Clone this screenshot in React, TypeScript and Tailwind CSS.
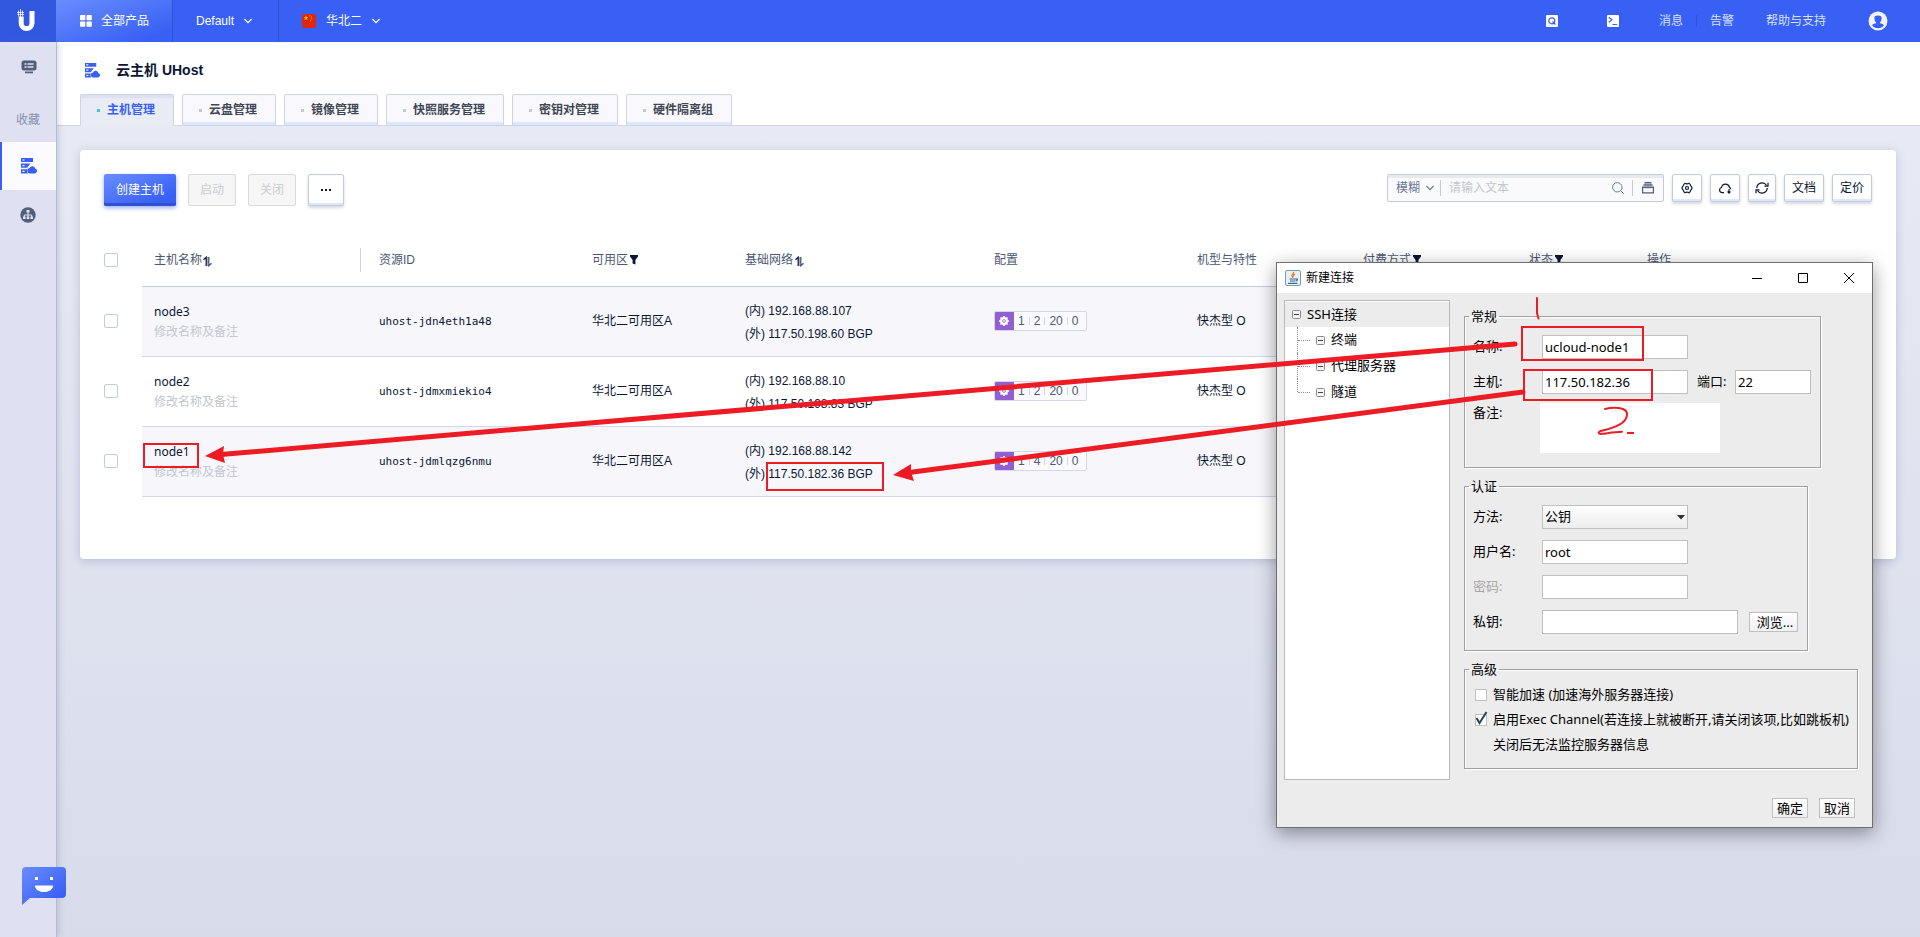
import React from "react";

const SANS = "font-['Liberation_Sans','Noto_Sans_CJK_SC',sans-serif]";

type Host = { name: string; id: string; inner: string; outer: string; spec: string[] };

const hosts: Host[] = [
  { name: "node3", id: "uhost-jdn4eth1a48", inner: "192.168.88.107", outer: "117.50.198.60 BGP", spec: ["1", "2", "20", "0"] },
  { name: "node2", id: "uhost-jdmxmiekio4", inner: "192.168.88.10", outer: "117.50.198.83 BGP", spec: ["1", "2", "20", "0"] },
  { name: "node1", id: "uhost-jdmlqzg6nmu", inner: "192.168.88.142", outer: "117.50.182.36 BGP", spec: ["1", "4", "20", "0"] },
];

const tabs = ["主机管理", "云盘管理", "镜像管理", "快照服务管理", "密钥对管理", "硬件隔离组"];

function Chevron({ className = "" }: { className?: string }) {
  return (
    <svg className={className} width="8" height="6" viewBox="0 0 8 6" fill="none" stroke="currentColor" strokeWidth="1.2">
      <path d="M0.4 1l3.600 3.600L7.600 1" />
    </svg>
  );
}

function ServerCloud({ size }: { size: number }) {
  return (
    <svg width={size} height={size} viewBox="0 0 16 16">
      <path fill="#3860f4" d="M0 0h12v4H0zM0 5.500h9.500L7 8.500 6.200 9.800H0zM0 11.300h6.200a4 4 0 0 0 .6 4.200H0z" />
      <path fill="#3860f4" d="M9.600 15.500h4a2.500 2.500 0 0 0 .6-4.900 3 3 0 0 0-5.700-.6 2.800 2.800 0 0 0 1.100 5.500z" />
      <path stroke="#fff" strokeWidth="1.100" d="M1.500 2h2M1.500 7.600h2M1.500 13.400h2" />
    </svg>
  );
}

function SortIcon() {
  return (
    <svg className="mt-[2px]" width="9" height="11" viewBox="0 0 9 11" fill="none" strokeWidth="1.300">
      <path fill="#a3abbc" d="M3.500 1h2v9h-2z" />
      <path stroke="#16233f" d="M0.500 3.800L3.200 1.200V10" />
      <path stroke="#4b5873" d="M8.500 7.200L5.800 9.800V1" />
    </svg>
  );
}

function FilterIcon() {
  return (
    <svg width="8" height="10" viewBox="0 0 8 10">
      <path fill="#0a1633" d="M0 0h8v1.500L5.400 5v4.500L2.600 8.500V5L0 1.500z" />
    </svg>
  );
}

function Check({ label }: { label: string }) {
  return (
    <input
      type="checkbox"
      aria-label={label}
      className="block size-[14px] appearance-none rounded-[2px] border border-[#c3cad9] bg-white"
    />
  );
}

function TopBar() {
  return (
    <header className="flex h-[42px] items-stretch bg-[#3860f4] text-xs text-white">
      <a href="#" aria-label="UCloud" className="flex w-14 items-center justify-center bg-[#3358e0] pr-1">
        <svg width="22" height="24" viewBox="0 0 22 24">
          <path fill="none" stroke="#fff" strokeWidth="5" d="M6.200 7.500v6.700a5.400 5.400 0 0 0 10.800 0V2" />
          <path stroke="#fff" strokeWidth="0.900" strokeOpacity="0.850" d="M3.500 1.500v6M5.500 0v8M7.500 1.500v6M2 3.500h7M2.500 5.500h6.500" />
        </svg>
      </a>
      <button className="flex w-[117px] items-center gap-[9px] border-r border-[#3152c4] bg-linear-to-br from-[#6a8cff] to-[#3860f4] to-85% pl-6">
        <svg width="12" height="12" viewBox="0 0 12 12" fill="#fff">
          <rect width="5.300" height="5.300" rx="0.800" />
          <rect x="6.500" width="5.300" height="5.300" rx="0.800" />
          <rect y="6.500" width="5.300" height="5.300" rx="0.800" />
          <rect x="6.500" y="6.500" width="5.300" height="5.300" rx="0.800" />
        </svg>
        全部产品
      </button>
      <button className="flex w-[106px] items-center gap-[10px] border-r border-[#3152c4] pl-[23px]">
        Default
        <Chevron />
      </button>
      <button className="flex items-center gap-[10px] pl-[23px]">
        <svg width="14" height="14" viewBox="0 0 14 14">
          <rect width="14" height="14" rx="2" fill="#de2910" />
          <path fill="#ffde00" d="M4 1.800l.6 1.500h1.600L4.900 4.300l.5 1.600L4 5l-1.400.9.500-1.600-1.300-1h1.600z" />
          <path fill="#f5a800" d="M7.500 1.200h1v1h-1zM9 2.600h1v1H9zM9.200 4.600h1v1h-1zM8 6.200h1v1H8z" />
        </svg>
        华北二
        <Chevron />
      </button>
      <div className="ml-auto flex items-center pr-8 text-[#d9e1ff]">
        <button aria-label="搜索">
          <svg width="12" height="12" viewBox="0 0 12 12">
            <rect width="12" height="12" rx="1" fill="#fff" />
            <circle cx="5.800" cy="5.800" r="3" fill="none" stroke="#3860f4" strokeWidth="1.200" />
            <path stroke="#3860f4" strokeWidth="1.200" d="M6.500 6.500l3 3" />
          </svg>
        </button>
        <button aria-label="终端" className="ml-[49px]">
          <svg width="12" height="12" viewBox="0 0 12 12">
            <rect width="12" height="12" rx="1" fill="#fff" />
            <path fill="none" stroke="#3860f4" strokeWidth="1.200" d="M1.800 2.200L5 4.700 1.800 7.200M5.500 9.500h4.500" />
          </svg>
        </button>
        <a href="#" className="ml-10">消息</a>
        <span className="mx-[13px] h-3 w-px bg-[#3152d8]" />
        <a href="#">告警</a>
        <a href="#" className="ml-8">帮助与支持</a>
        <button aria-label="账户" className="ml-[42px]">
          <svg width="20" height="20" viewBox="0 0 20 20">
            <circle cx="10" cy="10" r="9.500" fill="#f1f4ff" />
            <path fill="#3860f4" d="M10 4.500c2.300 0 3.800.8 3.600 2.500 0 2-.7 3.600-1.700 4.500v.8c1.800.4 3.400 1 4.100 2a7.500 7.500 0 0 1-12 0c.7-1 2.300-1.600 4.100-2v-.8C7.100 10.600 6.400 9 6.400 7c-.2-1.700 1.300-2.500 3.600-2.500z" />
          </svg>
        </button>
      </div>
    </header>
  );
}

function SideBar() {
  return (
    <nav className="relative z-10 flex w-[57px] shrink-0 flex-col border-r border-[#b3bbd0] bg-[#dfe0f1] pt-[17px] text-xs text-[#8590ab] shadow-[2px_0_6px_rgba(100,110,150,0.25)]">
      <button aria-label="控制台" className="ml-[21px] self-start">
        <svg width="16" height="16" viewBox="0 0 16 16" fill="#525f78">
          <rect x="0.500" y="1.500" width="15" height="10" rx="2.500" />
          <path d="M4 12.500h8v1.800H4z" />
          <path stroke="#dfe0f1" strokeWidth="1.300" d="M3.500 5h2M6.500 5h6M3.500 8h2M6.500 8h6" />
        </svg>
      </button>
      <span className="mt-9 text-center leading-[18px]">收藏</span>
      <a href="#" aria-label="云主机" className="mt-[13px] flex h-12 items-center justify-center border-l-2 border-[#3860f4] bg-[#fafaff]">
        <ServerCloud size={16} />
      </a>
      <a href="#" aria-label="网络" className="flex h-[50px] items-center justify-center">
        <svg width="16" height="16" viewBox="0 0 16 16">
          <circle cx="8" cy="8" r="7.700" fill="#525f78" />
          <path fill="none" stroke="#dfe0f1" strokeWidth="1" d="M8 5v5M4.300 10V8h7.400v2" />
          <path fill="#dfe0f1" d="M6.500 3h3v2.500h-3zM3 9.500h2.600V12H3zM6.700 9.500h2.600V12H6.700zM10.400 9.500H13V12h-2.600z" />
        </svg>
      </a>
    </nav>
  );
}

const toolBtn =
  "flex h-7 items-center justify-center rounded-[2px] border border-[#c3cad9] bg-white text-xs text-[#0b1633] shadow-[inset_0_-2px_0_#dfe7ff,0_2px_3px_rgba(60,70,110,0.2)]";

function Toolbar() {
  return (
    <div className="flex items-start text-xs">
      <button className="h-8 w-[72px] rounded-[2px] bg-linear-to-br from-[#6a8cff] to-[#3860f4] to-80% text-white shadow-[inset_0_-3px_0_#3152cf,0_2px_4px_rgba(56,96,244,0.5)]">
        创建主机
      </button>
      <button disabled className="ml-3 h-8 w-12 rounded-[2px] border border-[#d8dade] bg-[#f6f6f6] text-[#c9cbd1]">启动</button>
      <button disabled className="ml-3 h-8 w-12 rounded-[2px] border border-[#d8dade] bg-[#f6f6f6] text-[#c9cbd1]">关闭</button>
      <button
        aria-label="更多"
        className="ml-3 flex h-8 w-9 items-center justify-center rounded-[2px] border border-[#c3cad9] bg-white shadow-[inset_0_-2px_0_#dfe7ff,0_2px_3px_rgba(60,70,110,0.2)]"
      >
        <svg width="10" height="2" viewBox="0 0 10 2" fill="#0b1633">
          <path d="M0 0h2v2H0zM4 0h2v2H4zM8 0h2v2H8z" />
        </svg>
      </button>
      <div className="ml-auto flex gap-2">
        <div className="flex h-7 w-[277px] items-center rounded-[2px] border border-[#c3cad9] bg-[#fafafc] pr-[9px] pl-2 text-[#6b7894] shadow-[inset_0_3px_0_#e9eaee]">
          <div className="relative flex w-[38px] items-center">
            <select aria-label="匹配方式" className="w-full appearance-none bg-transparent">
              <option>模糊</option>
            </select>
            <Chevron className="pointer-events-none absolute right-0" />
          </div>
          <span className="mr-2 ml-[6px] h-4 w-px bg-[#c3cad9]" />
          <input aria-label="搜索文本" placeholder="请输入文本" className="min-w-0 flex-1 bg-transparent outline-none placeholder:text-[#c2c6d0]" />
          <button aria-label="搜索">
            <svg width="12" height="12" viewBox="0 0 12 12" fill="none" stroke="#6b7894" strokeWidth="1">
              <circle cx="5.300" cy="5.300" r="4.700" />
              <path d="M8.700 8.700l3 3" />
            </svg>
          </button>
          <span className="mr-[9px] ml-2 h-4 w-px bg-[#c3cad9]" />
          <button aria-label="分组">
            <svg width="12" height="12" viewBox="0 0 12 12" fill="none" stroke="#525f78">
              <path d="M2.500 0.700h7M1.500 3h9" strokeWidth="1.400" />
              <path d="M0.600 5.500h10.800v5.400H0.600z" strokeWidth="1.200" />
              <path d="M0 5.300h12" strokeWidth="1.600" />
            </svg>
          </button>
        </div>
        <button aria-label="设置" className={`${toolBtn} w-[30px]`}>
          <svg width="12" height="12" viewBox="0 0 24 24" fill="none" stroke="#0b1633" strokeWidth="2.400" strokeLinejoin="round">
            <path d="M8 2.500c1.500 0 2.500 1.500 4 1.500s2.500-1.500 4-1.500 2.500 3.500 3.500 5 2.500 2.500 2.500 4.500-1.500 3-2.500 4.500-2 5-3.500 5-2.500-1.500-4-1.500-2.500 1.500-4 1.500-2.500-3.500-3.500-5S2 14 2 12s1.500-3 2.500-4.500 2-5 3.500-5z" />
            <circle cx="12" cy="12" r="3" />
          </svg>
        </button>
        <button aria-label="下载" className={`${toolBtn} w-[30px]`}>
          <svg width="13" height="12" viewBox="0 0 13 12" fill="none" stroke="#0b1633" strokeWidth="1.200">
            <path d="M5 10.600H3.200A2.600 2.600 0 0 1 2.500 5.500a4.100 4.100 0 0 1 8-.2 2.700 2.700 0 0 1 1.200 2" />
            <path d="M10 7v4M8.600 9.500L10 11l1.400-1.500" />
          </svg>
        </button>
        <button aria-label="刷新" className={`${toolBtn} w-7`}>
          <svg width="14" height="12" viewBox="0 0 14 12" fill="none" stroke="#0b1633" strokeWidth="1.200">
            <path d="M1.800 6A5.200 5.200 0 0 1 11.500 3.500M12.200 6a5.200 5.200 0 0 1-9.700 2.500" />
            <path d="M13 0.800v3.400H9.500M1 11.200V7.800h3.500" />
          </svg>
        </button>
        <button className={`${toolBtn} w-10`}>文档</button>
        <button className={`${toolBtn} w-10`}>定价</button>
      </div>
    </div>
  );
}

function HostTable() {
  const head = "px-3 text-left font-normal";
  return (
    <table className="mt-7 w-full table-fixed border-separate border-spacing-0 text-xs text-[#0b1633]">
      <colgroup>
        <col className="w-[38px]" />
        <col className="w-[225px]" />
        <col className="w-[213px]" />
        <col className="w-[153px]" />
        <col className="w-[249px]" />
        <col className="w-[203px]" />
        <col className="w-[166px]" />
        <col className="w-[166px]" />
        <col className="w-[118px]" />
        <col />
      </colgroup>
      <thead>
        <tr className="h-[53px] text-[#4b5873] *:not-first:border-b *:not-first:border-[#c3cad9]">
          <th className="p-0 pb-[2px]"><Check label="全选" /></th>
          <th className="p-0 pl-3 text-left font-normal">
            <span className="flex items-center justify-between pr-[6px]">
              <span className="flex items-center gap-px">主机名称<SortIcon /></span>
              <span className="h-6 w-px bg-[#cfd3e6]" />
            </span>
          </th>
          <th className={head}>资源ID</th>
          <th className={head}><span className="flex items-center gap-[2px]">可用区<FilterIcon /></span></th>
          <th className={head}><span className="flex items-center gap-[2px]">基础网络<SortIcon /></span></th>
          <th className={head}>配置</th>
          <th className={head}>机型与特性</th>
          <th className={head}><span className="flex items-center gap-[2px]">付费方式<FilterIcon /></span></th>
          <th className={head}><span className="flex items-center gap-[2px]">状态<FilterIcon /></span></th>
          <th className={head}>操作</th>
        </tr>
      </thead>
      <tbody>
        {hosts.map((h) => (
          <tr key={h.name} className="h-[70px] *:not-first:border-b *:not-first:border-[#d3d6ea] *:not-first:px-3 odd:*:not-first:bg-[#f6f6fb]">
            <td className="p-0 pb-[2px]"><Check label={h.name} /></td>
            <td>
              <div className="font-['Noto_Sans',sans-serif] leading-5">{h.name}</div>
              <div className="leading-5 text-[#c2c6d0]">修改名称及备注</div>
            </td>
            <td className="pt-[2px] font-['DejaVu_Sans_Mono',monospace] text-[11px]">{h.id}</td>
            <td className="pb-[2px]">华北二可用区A</td>
            <td className="pt-[2px] leading-[23px]">
              <div>(内) {h.inner}</div>
              <div>(外) {h.outer}</div>
            </td>
            <td className="pb-[2px]">
              <div className="inline-flex h-5 items-center overflow-hidden rounded-[2px] border border-[#d3d6ea] bg-[#fafafc] pr-1 align-middle text-[#4b5873]">
                <span className="-ml-px flex h-5 w-5 items-center justify-center bg-[#925fd0]">
                  <svg width="10" height="10" viewBox="0 0 10 10">
                    <circle cx="5" cy="5" r="2.900" fill="none" stroke="#fff" strokeWidth="2" />
                    <path stroke="#fff" strokeWidth="1.600" d="M5 0v10M0 5h10M1.500 1.500l7 7M8.500 1.500l-7 7" />
                    <circle cx="5" cy="5" r="1.800" fill="#925fd0" />
                    <circle cx="5" cy="5" r="0.900" fill="#fff" />
                  </svg>
                </span>
                {h.spec.map((s, i) => (
                  <React.Fragment key={i}>
                    {i > 0 && <span className="h-2 w-px bg-[#d3d6ea]" />}
                    <span className="px-1">{s}</span>
                  </React.Fragment>
                ))}
              </div>
            </td>
            <td className="pb-[2px]">快杰型 O</td>
            <td />
            <td />
            <td />
          </tr>
        ))}
      </tbody>
    </table>
  );
}

function MinusBox() {
  return (
    <svg width="9" height="9" viewBox="0 0 9 9">
      <rect x="0.500" y="0.500" width="8" height="8" rx="1" fill="#f4f4f4" stroke="#8a8a8a" />
      <path stroke="#444" d="M2 4.500h5" />
    </svg>
  );
}

const field = "h-6 border border-[#c0c0c0] bg-white px-[2px] outline-none";
const group =
  "border border-[#a0a0a0] px-2 shadow-[1px_1px_0_#fff,inset_1px_1px_0_#fff] [&>legend]:-ml-1 [&>legend]:px-[2px] [&>legend]:leading-5";
const dlgBtn = "h-5 border border-[#c0c0c0] bg-linear-to-b from-white to-[#f0f0f0] leading-none";

function Dialog() {
  return (
    <section
      role="dialog"
      aria-label="新建连接"
      className="absolute top-[262px] left-[1276px] z-20 w-[597px] border border-[#6f6f6f] bg-[#ececec] font-['Noto_Sans','Noto_Sans_CJK_SC',sans-serif] text-[13px] text-black shadow-[0_5px_18px_rgba(0,0,0,0.4)]"
    >
      <div className="flex h-[30px] items-center bg-white pl-2 text-xs">
        <svg width="16" height="16" viewBox="0 0 16 16">
          <rect x="0.500" y="0.500" width="15" height="15" rx="1.500" fill="#e9f0f5" stroke="#7f9bb0" />
          <path fill="none" stroke="#e77a24" strokeWidth="1.300" d="M8.600 1.800c1 1.500-2.600 2.600-1.600 4.300.4.700 1 1 .8 1.800M10 4c-1.600.8-2 1.400-1.300 2.400" />
          <path fill="none" stroke="#3d6b8e" strokeWidth="1.200" d="M4.500 9h6.500M5 11h5M3 13.300h9.500M11 9c2-.5 2 1.500-.5 2" />
        </svg>
        <h2 className="ml-[5px]">新建连接</h2>
        <div className="ml-auto flex items-center gap-9 pr-[18px]">
          <button aria-label="最小化">
            <svg className="block" width="10" height="10" viewBox="0 0 10 10" stroke="#000"><path d="M0 5.500h10" /></svg>
          </button>
          <button aria-label="最大化">
            <svg className="block" width="10" height="10" viewBox="0 0 10 10" stroke="#000" fill="none"><path d="M0.500 0.500h9v9h-9z" /></svg>
          </button>
          <button aria-label="关闭">
            <svg className="block" width="10" height="10" viewBox="0 0 10 10" stroke="#000"><path d="M0 0l10 10M10 0L0 10" /></svg>
          </button>
        </div>
      </div>
      <div className="flex items-start pt-[7px] pl-[7px]">
        <div className="h-[480px] w-[166px] shrink-0 border border-[#b8b8b8] bg-white pt-px">
          <div className="flex h-[25px] items-center gap-[6px] bg-[#ececec] pl-[7px]">
            <MinusBox />
            SSH连接
          </div>
          <ul className="ml-3">
            {["终端", "代理服务器", "隧道"].map((t, i) => (
              <li key={t} className="flex h-[26px] items-center">
                <span className={`self-start border-l border-dotted border-[#909090] ${i === 2 ? "h-[13px]" : "h-[26px]"}`} />
                <span className="mr-[6px] w-3 border-t border-dotted border-[#909090]" />
                <MinusBox />
                <span className="ml-[6px]">{t}</span>
              </li>
            ))}
          </ul>
        </div>
        <div className="ml-[14px] flex flex-col items-start pt-[6px]">
          <fieldset className={`${group} w-[357px] pt-[9px] pb-[14px]`}>
            <legend>常规</legend>
            <div className="flex items-center">
              <label htmlFor="name" className="w-[69px]">名称:</label>
              <input id="name" defaultValue="ucloud-node1" className={`${field} w-[146px]`} />
            </div>
            <div className="mt-[11px] flex items-center">
              <label htmlFor="host" className="w-[69px]">主机:</label>
              <input id="host" defaultValue="117.50.182.36" className={`${field} w-[146px]`} />
              <label htmlFor="port" className="ml-[9px] w-[38px]">端口:</label>
              <input id="port" defaultValue="22" className={`${field} w-[76px]`} />
            </div>
            <div className="mt-[9px] flex items-start">
              <label htmlFor="memo" className="w-[67px] leading-[18px]">备注:</label>
              <textarea id="memo" className="block h-[50px] w-[180px] resize-none bg-white outline-none" />
            </div>
          </fieldset>
          <fieldset className={`${group} mt-2 flex w-[344px] flex-col gap-[11px] pt-[9px] pb-4`}>
            <legend>认证</legend>
            <div className="flex items-center">
              <label htmlFor="method" className="w-[69px]">方法:</label>
              <div className="relative flex items-center">
                <select id="method" className="h-6 w-[146px] appearance-none border border-[#c0c0c0] bg-linear-to-b from-white to-[#ececec] px-[2px] outline-none">
                  <option>公钥</option>
                </select>
                <svg className="pointer-events-none absolute right-[3px]" width="8" height="5" viewBox="0 0 8 5"><path fill="#333" d="M0 0h8L4 4.500z" /></svg>
              </div>
            </div>
            <div className="flex items-center">
              <label htmlFor="user" className="w-[69px]">用户名:</label>
              <input id="user" defaultValue="root" className={`${field} w-[146px]`} />
            </div>
            <div className="flex items-center">
              <label htmlFor="pwd" className="w-[69px] text-[#a6a6a6]">密码:</label>
              <input id="pwd" type="password" disabled className={`${field} w-[146px]`} />
            </div>
            <div className="flex items-center">
              <label htmlFor="key" className="w-[69px]">私钥:</label>
              <input id="key" className={`${field} w-[196px]`} />
              <button className={`${dlgBtn} ml-[11px] w-[49px] pl-[3px]`}>浏览...</button>
            </div>
          </fieldset>
          <fieldset className={`${group} mt-2 w-[392px] pt-[3px] pb-[11px]`}>
            <legend>高级</legend>
            <label className="ml-[2px] flex h-[25px] items-center gap-[6px] whitespace-nowrap">
              <input type="checkbox" className="size-3 appearance-none border border-[#c0c0c0] bg-white" />
              智能加速 (加速海外服务器连接)
            </label>
            <label className="relative ml-[2px] flex h-[25px] items-center gap-[6px] whitespace-nowrap">
              <input type="checkbox" defaultChecked className="size-3 appearance-none border border-[#c0c0c0] bg-white" />
              <svg className="pointer-events-none absolute top-[4px] left-0" width="13" height="14" viewBox="0 0 13 14">
                <path fill="none" stroke="#27455f" strokeWidth="2" d="M1.500 7l3 5L11.500 1" />
              </svg>
              启用Exec Channel(若连接上就被断开,请关闭该项,比如跳板机)
            </label>
            <p className="ml-5 h-[25px] leading-[25px]">关闭后无法监控服务器信息</p>
          </fieldset>
        </div>
      </div>
      <div className="mt-[18px] flex justify-end gap-[11px] pr-[17px] pb-[9px]">
        <button className={`${dlgBtn} w-9`}>确定</button>
        <button className={`${dlgBtn} w-9`}>取消</button>
      </div>
    </section>
  );
}

function Annotations() {
  return (
    <svg className="pointer-events-none absolute top-0 left-0 z-30" width="1920" height="937" viewBox="0 0 1920 937" fill="none" stroke="#ed1c24">
      <g strokeWidth="2">
        <rect x="144" y="444" width="54" height="23" />
        <rect x="767" y="463" width="116" height="27" />
        <rect x="1522" y="327" width="121" height="33" />
        <rect x="1524" y="370" width="128" height="30" />
        <path strokeLinecap="round" d="M1537 298v15l1.500 5.500" />
        <path strokeLinecap="round" strokeLinejoin="round" d="M1605 409c6-1.500 13-1.500 18 0 6 2.500 5 9-1 14-6 4.500-14 6-21 8-3.500 1-3 3.300 1 2.800 7-.8 13-1.800 20-2" />
        <path d="M1627 433h7" />
      </g>
      <g strokeWidth="5" strokeLinecap="round">
        <path d="M221 454.500L1515 344" />
        <path d="M909 472.500L1523 392" />
      </g>
      <g fill="#ed1c24" stroke="none">
        <path d="M205 456l19-10-1 8 2 9z" />
        <path d="M893 475l18-11v8l3 9z" />
      </g>
    </svg>
  );
}

export default function App() {
  return (
    <div className={`relative flex min-h-screen flex-col overflow-hidden ${SANS}`}>
      <TopBar />
      <div className="flex flex-1">
        <SideBar />
        <main className="min-w-0 flex-1 bg-linear-to-b from-[#e9ecf5] to-[#d8dbea]">
          <div className="border-b border-[#d0d3e6] bg-white pt-4 pl-[23px]">
            <h1 className="flex h-6 items-center gap-4 pl-[5px] text-sm font-bold text-[#0b1633]">
              <ServerCloud size={15} />
              云主机 UHost
            </h1>
            <div role="tablist" className="mt-3 -mb-px flex gap-2">
              {tabs.map((t, i) => (
                <button
                  key={t}
                  role="tab"
                  aria-selected={i === 0}
                  className={
                    "flex h-8 items-center gap-[7px] rounded-t-[2px] border pr-[18px] pl-4 text-xs font-bold " +
                    (i === 0
                      ? "border-[#cfd3ea] border-b-[#e9ecf5] bg-[#e9ecf5] text-[#3860f4] shadow-[inset_0_3px_0_#dfe0f1]"
                      : "border-[#cfd3ea] bg-[#f9f9fd] text-[#404654] shadow-[inset_0_-3px_0_#dfe7ff]")
                  }
                >
                  <span className={i === 0 ? "size-[3px] bg-[#35c9f5]" : "size-[3px] bg-[#c6c8d2]"} />
                  {t}
                </button>
              ))}
            </div>
          </div>
          <div className="mt-6 mr-6 ml-[23px] rounded-[4px] bg-white px-6 pt-6 pb-[62px] shadow-[0_2px_10px_rgba(90,100,150,0.3)]">
            <Toolbar />
            <HostTable />
          </div>
        </main>
      </div>
      <button aria-label="在线客服" className="absolute bottom-8 left-[22px] z-20">
        <svg className="block" width="44" height="38" viewBox="0 0 44 38">
          <defs>
            <linearGradient id="chat" x1="0" y1="0" x2="1" y2="1">
              <stop offset="0" stopColor="#6a8cff" />
              <stop offset="0.850" stopColor="#3860f4" />
            </linearGradient>
          </defs>
          <path fill="url(#chat)" d="M4 0h36a4 4 0 0 1 4 4v23a4 4 0 0 1-4 4H8l-8 7V4a4 4 0 0 1 4-4z" />
          <path fill="#fff" d="M13 10h3v3h-3zM28 10h3v3h-3zM13.500 18.500h17c.8 0 .6 1 .3 1.800C29.500 23.500 26 25 22 25s-7.500-1.500-8.800-4.700c-.3-.8-.5-1.800.3-1.800z" />
        </svg>
      </button>
      <Dialog />
      <Annotations />
    </div>
  );
}
